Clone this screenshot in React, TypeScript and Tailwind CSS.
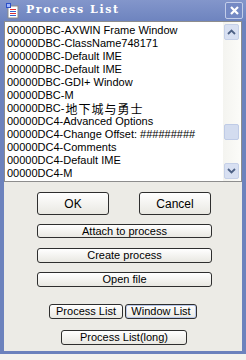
const items = [
  "00000DBC-AXWIN Frame Window",
  "00000DBC-ClassName748171",
  "00000DBC-Default IME",
  "00000DBC-Default IME",
  "00000DBC-GDI+ Window",
  "00000DBC-M",
  "CJK",
  "00000DC4-Advanced Options",
  "00000DC4-Change Offset: #########",
  "00000DC4-Comments",
  "00000DC4-Default IME",
  "00000DC4-M",
];

const btn =
  "flex items-center justify-center rounded-[3px] border border-[#2e2e2e] bg-gradient-to-b from-[#ffffff] to-[#e9e8e2] text-[11px] leading-none text-black";

const AppIcon = () => (
  <svg width="15" height="16" viewBox="0 0 15 16">
    <rect x="3" y="3" width="10" height="12" fill="#fff" stroke="#8a8a8a" />
    <rect x="1" y="0" width="5" height="5" fill="#2b50c8" />
    <rect x="2" y="1" width="3" height="3" fill="#9fb6ff" />
    <rect x="5" y="6" width="6" height="1" fill="#d33" />
    <rect x="5" y="8" width="6" height="1" fill="#36c" />
    <rect x="5" y="10" width="6" height="1" fill="#d33" />
    <rect x="5" y="12" width="6" height="1" fill="#36c" />
  </svg>
);

const Chevron = ({ up }: { up?: boolean }) => (
  <svg width="9" height="6" viewBox="0 0 9 6">
    <path
      d={up ? "M1 5 L4.5 1.5 L8 5" : "M1 1 L4.5 4.5 L8 1"}
      fill="none"
      stroke="#4d6185"
      strokeWidth="1.8"
    />
  </svg>
);

export default function App() {
  return (
    <div className="w-[246px] h-[360px] bg-[#f3f2ee] font-['Liberation_Sans',Arial,sans-serif]">
      <div className="h-[354px] flex flex-col bg-[#6c82bd]">
        {/* title bar */}
        <div className="h-[21px] flex items-center pl-[5px] pr-[3px] bg-gradient-to-b from-[#8396cb] to-[#6e84bf]">
          <AppIcon />
          <span className="ml-[6px] text-white font-bold text-[11px] tracking-[1.6px] font-['DejaVu_Serif',serif]">
            Process List
          </span>
          <div className="ml-auto w-[18px] h-[17px] flex items-center justify-center border border-[#c3cde9] rounded-[2px] bg-[#7489c4]">
            <svg width="9" height="9" viewBox="0 0 9 9">
              <path d="M1 1 L8 8 M8 1 L1 8" stroke="#fff" strokeWidth="2.2" />
            </svg>
          </div>
        </div>

        <div className="flex-1 flex flex-col mx-[4px] mb-[3px] bg-[#ecebe6]">
          {/* list box */}
          <div className="h-[161px] flex border border-[#8d8d8d] bg-white">
            <div className="flex-1 pl-[2px] pt-[2px]">
              {items.map((t, i) =>
                t === "CJK" ? (
                  <div key={i} className="h-[13px] flex items-center text-[11px] leading-[13px] whitespace-nowrap text-black">
                    <span>00000DBC-</span>
                    <span className="ml-[1px] tracking-[1px] leading-[11px] font-['Noto_Sans_CJK_SC',sans-serif] text-[12px]">地下城与勇士</span>
                  </div>
                ) : (
                  <div key={i} className="h-[13px] text-[11px] leading-[13px] whitespace-nowrap text-black">
                    {t}
                  </div>
                )
              )}
            </div>
            <div className="w-[17px] mr-[1px] flex flex-col bg-gradient-to-r from-[#f4f4f0] to-[#fbfbf8] py-[2px]">
              <div className="h-[16px] mx-[1px] flex items-center justify-center rounded-[2px] bg-[#d8e0f2] border border-[#c5d0e8]">
                <Chevron up />
              </div>
              <div className="h-[84px]" />
              <div className="h-[16px] mx-[1px] rounded-[2px] bg-[#d3dcef] border border-[#bfcbe6]" />
              <div className="flex-1" />
              <div className="h-[16px] mx-[1px] flex items-center justify-center rounded-[2px] bg-[#d8e0f2] border border-[#c5d0e8]">
                <Chevron />
              </div>
            </div>
          </div>

          {/* buttons */}
          <div className="flex flex-col pt-[10px]">
            <div className="flex pl-[33px] gap-[30px]">
              <div className={`${btn} w-[72px] h-[23px] text-[12px]`}>OK</div>
              <div className={`${btn} w-[72px] h-[23px] text-[12px]`}>Cancel</div>
            </div>
            <div className={`${btn} ml-[33px] mt-[9px] w-[175px] h-[14px]`}>Attach to process</div>
            <div className={`${btn} ml-[33px] mt-[10px] w-[175px] h-[15px]`}>Create process</div>
            <div className={`${btn} ml-[33px] mt-[9px] w-[175px] h-[15px]`}>Open file</div>
            <div className="flex ml-[45px] mt-[17px] gap-[2px]">
              <div className={`${btn} w-[74px] h-[15px]`}>Process List</div>
              <div className={`${btn} w-[72px] h-[15px] from-[#f2f4fa] to-[#dfe3ee] shadow-[inset_0_0_0_1px_#b9c8ea]`}>Window List</div>
            </div>
            <div className={`${btn} ml-[57px] mt-[11px] w-[126px] h-[15px]`}>Process List(long)</div>
          </div>
        </div>
      </div>
    </div>
  );
}
